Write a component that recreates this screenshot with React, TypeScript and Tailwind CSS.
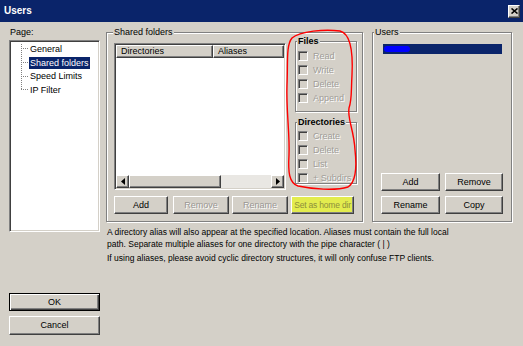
import React from 'react'

const raised =
  'border border-t-white border-l-white border-r-[#404040] border-b-[#404040] shadow-[inset_-1px_-1px_0_#808080] bg-[#d4d0c8]'
const sunken =
  'border border-t-[#808080] border-l-[#808080] border-r-white border-b-white shadow-[inset_1px_1px_0_#404040,inset_-1px_-1px_0_#d4d0c8]'
const etched = 'border border-[#808080] shadow-[inset_1px_1px_0_#fff,1px_1px_0_#fff]'

function Btn({ label, w, disabled, className = '' }: { label: string; w: string; disabled?: boolean; className?: string }) {
  return (
    <button
      className={`${raised} ${w} h-[18px] flex items-center justify-center text-[9px] leading-none ${
        disabled ? 'text-[#9a9793] [text-shadow:1px_1px_0_#fff]' : 'text-black'
      } ${className}`}
    >
      {label}
    </button>
  )
}

function Check({ label }: { label: string }) {
  return (
    <div className="flex items-center h-[14px] pl-[2px]">
      <span className={`${sunken} w-[10px] h-[10px] bg-[#d4d0c8] shrink-0`} />
      <span className="ml-[5px] text-[9px] leading-none text-[#a09d98] [text-shadow:1px_1px_0_#fff]">{label}</span>
    </div>
  )
}

function Arrow({ dir }: { dir: 'left' | 'right' }) {
  return (
    <div className={`${raised} w-[13px] h-full flex items-center justify-center`}>
      <svg width="4" height="7" viewBox="0 0 4 7">
        {dir === 'left' ? <path d="M4 0 L0 3.5 L4 7 Z" fill="#000" /> : <path d="M0 0 L4 3.5 L0 7 Z" fill="#000" />}
      </svg>
    </div>
  )
}

export default function App() {
  return (
    <div className="relative w-[523px] h-[346px] bg-[#d4d0c8] overflow-hidden flex flex-col font-['Liberation_Sans',Arial,sans-serif] text-black">
      {/* Title bar */}
      <div className="h-[22px] bg-[#0a246a] flex items-center justify-between pl-[4px] pr-[3px]">
        <span className="text-white font-bold text-[10px] leading-none">Users</span>
        <div className={`${raised} w-[12px] h-[13px] flex items-center justify-center`}>
          <svg width="7" height="6" viewBox="0 0 7 6">
            <path d="M0.5 0.5 L6.5 5.5 M6.5 0.5 L0.5 5.5" stroke="#000" strokeWidth="1.6" />
          </svg>
        </div>
      </div>

      <div className="flex pl-[9px] pt-[4px]">
        {/* Left column */}
        <div className="w-[91px] flex flex-col">
          <div className="text-[9px] leading-[13px] pl-[1px]">Page:</div>
          <div className={`${sunken} mt-[1px] h-[192px] bg-white relative`}>
            <div className="absolute left-[11px] top-[3px] h-[45px] border-l border-dotted border-[#808080]" />
            <div className="pt-[1px] pl-[11px] flex flex-col text-[9px]">
              {['General', 'Shared folders', 'Speed Limits', 'IP Filter'].map((t, i) => (
                <div key={t} className="flex items-center h-[13.7px]">
                  <span className="w-[7px] border-t border-dotted border-[#808080]" />
                  <span
                    className={`ml-[1px] px-[1px] leading-[12px] ${i === 1 ? 'bg-[#0a246a] text-white' : ''}`}
                  >
                    {t}
                  </span>
                </div>
              ))}
            </div>
          </div>
          <button className="mt-[61px] h-[18px] border border-black shadow-[inset_1px_1px_0_#fff,inset_-1px_-1px_0_#404040,inset_-2px_-2px_0_#808080] bg-[#d4d0c8] text-[9px] leading-none flex items-center justify-center">
            OK
          </button>
          <Btn label="Cancel" w="w-full" className="mt-[5px] h-[19px]" />
        </div>

        {/* Right side */}
        <div className="ml-[6px] w-[406px] flex flex-col">
          <div className="flex">
            {/* Shared folders */}
            <fieldset className={`${etched} w-[257px] h-[196px] p-0 m-0 min-w-0`}>
              <legend className="ml-[6px] px-[1px] text-[9px] leading-[13px] bg-[#d4d0c8]">Shared folders</legend>
              <div className="flex pl-[7px]">
                <div className={`${sunken} mt-[4px] w-[172px] h-[147px] bg-white flex flex-col`}>
                  <div className="flex mt-[1px] mx-[1px] h-[13px] text-[9px] leading-none">
                    <div className={`${raised} w-[97px] flex items-center pl-[4px]`}>Directories</div>
                    <div className={`${raised} flex-1 flex items-center pl-[4px]`}>Aliases</div>
                  </div>
                  <div className="flex-1" />
                  <div className="flex mx-[1px] mb-[1px] h-[13px]">
                    <Arrow dir="left" />
                    <div className={`${raised} w-[92px] h-full`} />
                    <div className="flex-1 bg-[#e9e7e3]" />
                    <Arrow dir="right" />
                  </div>
                </div>
                <div className="ml-[9px] mt-[-4px] w-[62px] flex flex-col">
                  <fieldset className={`${etched} h-[77px] p-0 m-0 min-w-0`}>
                    <legend className="ml-[1px] px-[1px] text-[9px] font-bold leading-[13px] bg-[#d4d0c8]">Files</legend>
                    <div className="pt-[1px]">
                      <Check label="Read" />
                      <Check label="Write" />
                      <Check label="Delete" />
                      <Check label="Append" />
                    </div>
                  </fieldset>
                  <fieldset className={`${etched} mt-[4px] h-[68px] p-0 m-0 min-w-0`}>
                    <legend className="ml-[1px] px-[1px] text-[9px] font-bold leading-[13px] bg-[#d4d0c8]">Directories</legend>
                    <div className="pt-[0px]">
                      <Check label="Create" />
                      <Check label="Delete" />
                      <Check label="List" />
                      <Check label="+ Subdirs" />
                    </div>
                  </fieldset>
                </div>
              </div>
              <div className="flex pl-[7px] mt-[6px]">
                <Btn label="Add" w="w-[54px]" />
                <Btn label="Remove" w="w-[56px]" disabled className="ml-[5px]" />
                <Btn label="Rename" w="w-[56px]" disabled className="ml-[3px]" />
                <button className="ml-[3px] w-[63px] h-[18px] border border-t-white border-l-white border-r-[#404040] border-b-[#404040] shadow-[inset_-1px_-1px_0_#808080] bg-[#e3ec4e] text-[8.5px] tracking-[-0.2px] leading-none text-[#8d8f3c] whitespace-nowrap">
                  Set as home dir
                </button>
              </div>
            </fieldset>

            {/* Users */}
            <fieldset className={`${etched} ml-[9px] w-[140px] h-[196px] p-0 m-0 min-w-0 flex flex-col`}>
              <legend className="ml-[1px] px-[1px] text-[9px] leading-[13px] bg-[#d4d0c8]">Users</legend>
              <div className="pl-[10px] mt-[5px]">
                <div className="w-[119px] h-[10px] bg-[#0a246a] flex items-center">
                  <div className="ml-[1px] w-[26px] h-[6px] bg-[#0000ff] rounded-[3px]" />
                </div>
              </div>
              <div className="flex-1" />
              <div className="pl-[8px] pb-[7px] flex flex-col gap-[5px]">
                <div className="flex gap-[5px]">
                  <Btn label="Add" w="w-[59px]" />
                  <Btn label="Remove" w="w-[58px]" />
                </div>
                <div className="flex gap-[5px]">
                  <Btn label="Rename" w="w-[59px]" />
                  <Btn label="Copy" w="w-[58px]" />
                </div>
              </div>
            </fieldset>
          </div>

          <div className="mt-[4px] pl-[1px] text-[8.5px] leading-[12px] whitespace-nowrap">
            <p>
              A directory alias will also appear at the specified location. Aliases must contain the full local
              <br />
              path. Separate multiple aliases for one directory with the pipe character ( | )
            </p>
            <p className="mt-[2px]">
              If using aliases, please avoid cyclic directory structures, it will only confuse FTP clients.
            </p>
          </div>
        </div>
      </div>

      {/* red freehand annotation */}
      <svg className="absolute left-0 top-0 pointer-events-none" width="523" height="346" viewBox="0 0 523 346">
        <path
          d="M292 38 C300 31, 325 29, 340 31 C352 34, 353 55, 352 75 C351 92, 352 100, 349 108 C347 118, 354 130, 355 150 C357 168, 356 182, 348 187 C335 191, 312 189, 298 186 C289 183, 288 172, 289 155 C290 135, 286 110, 287 85 C288 62, 286 45, 292 38 Z"
          fill="none"
          stroke="#ff0000"
          strokeWidth="1.4"
        />
      </svg>
    </div>
  )
}
